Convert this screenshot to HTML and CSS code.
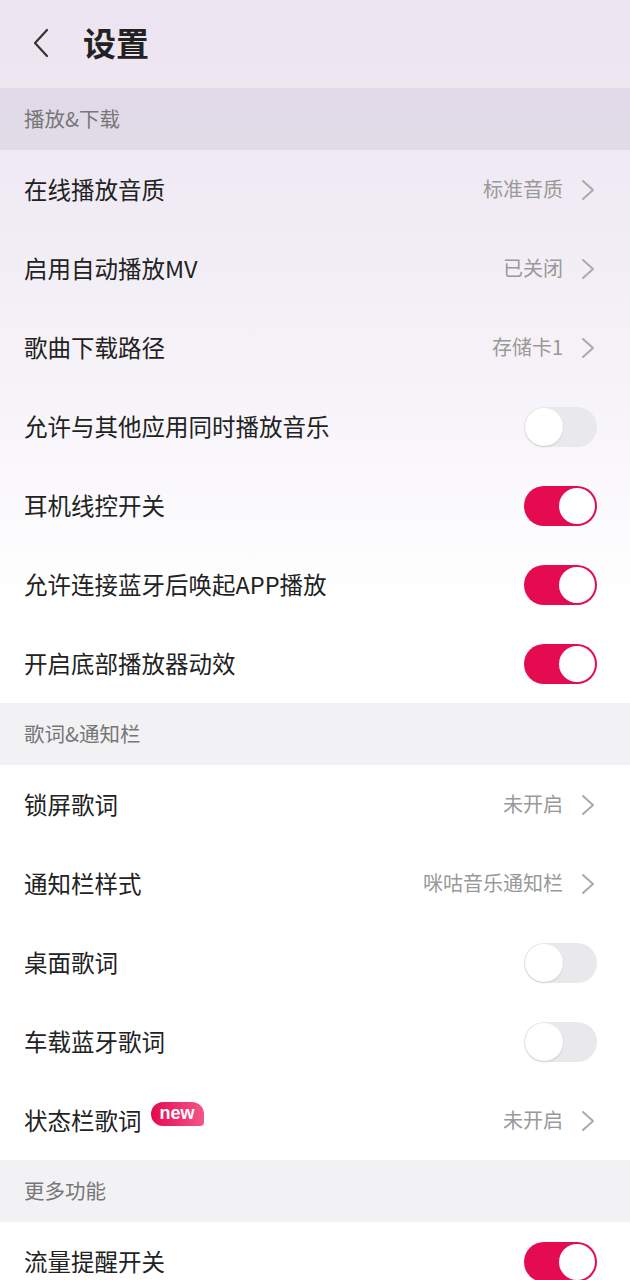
FILE: index.html
```html
<!DOCTYPE html>
<html lang="zh-CN">
<head>
  <meta charset="UTF-8">
  <meta name="viewport" content="width=device-width, initial-scale=1.0">
  <title>设置</title>
  <link rel="stylesheet" href="styles.css">
</head>
<body>
  <div class="page">
    <!-- Top bar -->
    <header class="topbar">
      <svg class="back" width="20" height="30" viewBox="0 0 20 30"><path d="M16 2 L4 15 L16 28" fill="none" stroke="#333" stroke-width="2.2" stroke-linecap="round" stroke-linejoin="round"/></svg>
      <h1 class="title">设置</h1>
    </header>

    <!-- 播放&下载 -->
    <div class="section tinted">播放&amp;下载</div>
    <div class="row">
      <span class="label">在线播放音质</span>
      <span class="value">标准音质</span>
      <svg class="chev" width="16" height="22" viewBox="0 0 16 22"><path d="M3 2 L13 11 L3 20" fill="none" stroke="#aaa" stroke-width="2" stroke-linecap="round" stroke-linejoin="round"/></svg>
    </div>
    <div class="row">
      <span class="label">启用自动播放MV</span>
      <span class="value">已关闭</span>
      <svg class="chev" width="16" height="22" viewBox="0 0 16 22"><path d="M3 2 L13 11 L3 20" fill="none" stroke="#aaa" stroke-width="2" stroke-linecap="round" stroke-linejoin="round"/></svg>
    </div>
    <div class="row">
      <span class="label">歌曲下载路径</span>
      <span class="value">存储卡1</span>
      <svg class="chev" width="16" height="22" viewBox="0 0 16 22"><path d="M3 2 L13 11 L3 20" fill="none" stroke="#aaa" stroke-width="2" stroke-linecap="round" stroke-linejoin="round"/></svg>
    </div>
    <div class="row">
      <span class="label">允许与其他应用同时播放音乐</span>
      <span class="switch"></span>
    </div>
    <div class="row">
      <span class="label">耳机线控开关</span>
      <span class="switch on"></span>
    </div>
    <div class="row">
      <span class="label">允许连接蓝牙后唤起APP播放</span>
      <span class="switch on"></span>
    </div>
    <div class="row">
      <span class="label">开启底部播放器动效</span>
      <span class="switch on"></span>
    </div>

    <!-- 歌词&通知栏 -->
    <div class="section">歌词&amp;通知栏</div>
    <div class="row">
      <span class="label">锁屏歌词</span>
      <span class="value">未开启</span>
      <svg class="chev" width="16" height="22" viewBox="0 0 16 22"><path d="M3 2 L13 11 L3 20" fill="none" stroke="#aaa" stroke-width="2" stroke-linecap="round" stroke-linejoin="round"/></svg>
    </div>
    <div class="row">
      <span class="label">通知栏样式</span>
      <span class="value">咪咕音乐通知栏</span>
      <svg class="chev" width="16" height="22" viewBox="0 0 16 22"><path d="M3 2 L13 11 L3 20" fill="none" stroke="#aaa" stroke-width="2" stroke-linecap="round" stroke-linejoin="round"/></svg>
    </div>
    <div class="row">
      <span class="label">桌面歌词</span>
      <span class="switch"></span>
    </div>
    <div class="row">
      <span class="label">车载蓝牙歌词</span>
      <span class="switch"></span>
    </div>
    <div class="row">
      <span class="label">状态栏歌词 <span class="badge">new</span></span>
      <span class="value">未开启</span>
      <svg class="chev" width="16" height="22" viewBox="0 0 16 22"><path d="M3 2 L13 11 L3 20" fill="none" stroke="#aaa" stroke-width="2" stroke-linecap="round" stroke-linejoin="round"/></svg>
    </div>

    <!-- 更多功能 -->
    <div class="section">更多功能</div>
    <div class="row">
      <span class="label">流量提醒开关</span>
      <span class="switch on"></span>
    </div>
  </div>
</body>
</html>
```

FILE: styles.css
```css
body {
  margin: 0;
  font-family: "Noto Sans CJK SC", "Noto Sans", sans-serif;
  background: #fff;
}
.page {
  width: 630px;
  height: 1280px;
  overflow: hidden;
  background: linear-gradient(to bottom, #ece4f0 0px, #efe9f3 150px, #f6f3f8 380px, #fcfbfd 540px, #ffffff 600px);
}
.topbar {
  height: 88px;
  display: flex;
  align-items: center;
  padding-left: 31px;
  padding-bottom: 3px;
  box-sizing: border-box;
}
.title {
  margin: 0 0 0 32px;
  font-size: 33px;
  font-weight: bold;
  color: #222;
  line-height: 1;
}
.section {
  height: 62px;
  display: flex;
  align-items: center;
  padding: 0 0 3px 24px;
  box-sizing: border-box;
  font-size: 20.5px;
  color: #777;
  background: #f2f2f4;
}
.section.tinted {
  background: rgba(205, 198, 214, 0.4);
}
.row {
  height: 79px;
  display: flex;
  align-items: center;
  padding: 0 34px 2px 24px;
  box-sizing: border-box;
}
.label {
  flex: 1;
  font-size: 23.5px;
  color: #222;
  display: flex;
  align-items: center;
}
.value {
  font-size: 20px;
  color: #999;
  margin-right: 17px;
}
.chev {
  display: block;
  margin-top: 2px;
}
.switch {
  position: relative;
  width: 73px;
  height: 40px;
  border-radius: 20px;
  background: #e9e9eb;
  margin: 2px -1px 0 0;
}
.switch::after {
  content: "";
  position: absolute;
  left: 1px;
  top: 1px;
  width: 38px;
  height: 38px;
  border-radius: 50%;
  background: #fff;
  box-shadow: 0 1px 2px rgba(0, 0, 0, 0.12);
}
.switch.on {
  background: #e40b50;
}
.switch.on::after {
  left: auto;
  right: 2px;
  top: 2px;
  width: 36px;
  height: 36px;
  box-shadow: none;
}
.badge {
  margin-left: 9px;
  margin-top: -12px;
  padding: 0 9px;
  height: 24px;
  line-height: 22px;
  font-family: "Liberation Sans", Arial, sans-serif;
  font-size: 18px;
  font-weight: bold;
  color: #fff;
  background: linear-gradient(to right, #e5094f, #f4558a);
  border-radius: 12px 12px 4px 12px;
}
```
